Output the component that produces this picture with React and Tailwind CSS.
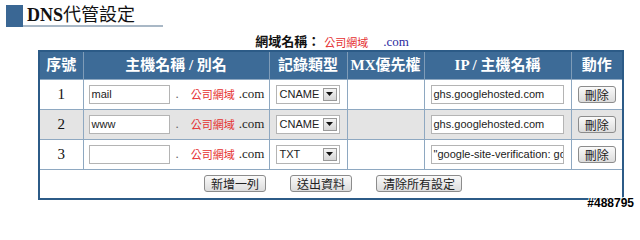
const serif = 'font-["Liberation_Serif","Noto_Sans_CJK_TC",serif]';

const rows = [
  { no: 1, host: 'mail', type: 'CNAME', ip: 'ghs.googlehosted.com', bg: 'bg-white' },
  { no: 2, host: 'www', type: 'CNAME', ip: 'ghs.googlehosted.com', bg: 'bg-[#e4e4e4]' },
  { no: 3, host: '', type: 'TXT', ip: '"google-site-verification: google', bg: 'bg-white' },
];

function Btn({ children, className = '' }) {
  return (
    <button className={`h-[17px] px-[6px] border border-[#8c8c8c] rounded-[3px] bg-gradient-to-b from-[#fafafa] to-[#dcdcdc] text-[12px] leading-[15px] text-[#222] font-["Noto_Sans_CJK_TC",sans-serif] ${className}`}>
      {children}
    </button>
  );
}

function TextBox({ value, width }) {
  return (
    <div className={`h-[19px] ${width} border border-[#b4b4b4] bg-white px-[2px] text-[11px] leading-[17px] text-[#222] font-["Liberation_Sans",sans-serif] overflow-hidden whitespace-nowrap`}>
      {value}
    </div>
  );
}

function Select({ value }) {
  return (
    <div className="h-[19px] w-[64px] border border-[#b4b4b4] bg-white flex items-center justify-between pl-[3px] pr-[2px]">
      <span className='text-[11px] leading-[17px] text-[#222] font-["Liberation_Sans",sans-serif]'>{value}</span>
      <span className="w-[14px] h-[13px] border border-[#9a9a9a] bg-gradient-to-b from-[#f4f4f4] to-[#d6d6d6] flex items-center justify-center">
        <svg width="7" height="4" viewBox="0 0 7 4"><path d="M0 0h7L3.5 4z" fill="#111" /></svg>
      </span>
    </div>
  );
}

export default function App() {
  const th = `bg-[#3d6b97] text-white font-bold text-[15px] border-x border-[#7f9cb8] ${serif}`;
  const td = 'border border-[#8ea8c1]';
  return (
    <div className="relative w-[640px] h-[211px] bg-white overflow-hidden">
      <div className="pt-[5px] pl-[6px] flex items-end">
        <div className="w-[17px] h-[22px] bg-[#3a6794]" />
        <div className="border-b-2 border-[#a9b8c6] pl-[4px] pr-[28px] h-[22px] flex items-end">
          <span className={`text-[18px] leading-[20px] text-[#111] ${serif}`}>
            <b>DNS</b>代管設定
          </span>
        </div>
      </div>

      <div className="ml-[38px] w-[584px] mt-[7px]">
        <div className="h-[16px] flex items-end justify-center pl-[4px]">
          <span className={`text-[13px] font-bold text-[#111] leading-[16px] ${serif}`}>網域名稱：</span>
          <span className='text-[11px] text-[#e53030] ml-[4px] leading-[16px] font-["Noto_Sans_CJK_TC",sans-serif]'>公司網域</span>
          <span className={`text-[13px] text-[#2a2aa0] ml-[15px] leading-[16px] ${serif}`}>.com</span>
        </div>

        <table className="w-[584px] border-collapse border-2 border-[#2c5b87] table-fixed">
          <colgroup>
            <col className="w-[44px]" />
            <col className="w-[186px]" />
            <col className="w-[78px]" />
            <col className="w-[77px]" />
            <col className="w-[147px]" />
            <col className="w-[52px]" />
          </colgroup>
          <thead>
            <tr className="h-[28px]">
              <th className={th}>序號</th>
              <th className={th}>主機名稱 / 別名</th>
              <th className={th}>記錄類型</th>
              <th className={th}>MX優先權</th>
              <th className={th}>IP / 主機名稱</th>
              <th className={th}>動作</th>
            </tr>
          </thead>
          <tbody>
            {rows.map((r) => (
              <tr key={r.no} className={`h-[30px] ${r.bg}`}>
                <td className={`${td} text-center text-[15px] text-[#111] ${serif}`}>{r.no}</td>
                <td className={td}>
                  <div className="flex items-center pl-[5px]">
                    <TextBox value={r.host} width="w-[81px]" />
                    <span className={`text-[13px] text-[#666] ml-[6px] ${serif}`}>.</span>
                    <span className='text-[11px] text-[#e53030] ml-[12px] font-["Noto_Sans_CJK_TC",sans-serif]'>公司網域</span>
                    <span className={`text-[13px] text-[#222] ml-[4px] ${serif}`}>.com</span>
                  </div>
                </td>
                <td className={td}>
                  <div className="pl-[6px]">
                    <Select value={r.type} />
                  </div>
                </td>
                <td className={td}></td>
                <td className={td}>
                  <div className="pl-[6px]">
                    <TextBox value={r.ip} width="w-[133px]" />
                  </div>
                </td>
                <td className={td}>
                  <div className="flex justify-center">
                    <Btn>刪除</Btn>
                  </div>
                </td>
              </tr>
            ))}
            <tr className="h-[30px] bg-white">
              <td colSpan={6} className={td}>
                <div className="flex justify-center gap-[24px] pl-[4px]">
                  <Btn>新增一列</Btn>
                  <Btn>送出資料</Btn>
                  <Btn>清除所有設定</Btn>
                </div>
              </td>
            </tr>
          </tbody>
        </table>
      </div>

      <div className='absolute right-[6px] bottom-[1px] text-[12px] font-bold text-black leading-[13px] font-["Liberation_Sans",sans-serif] [text-shadow:1px_0_0_#fff,-1px_0_0_#fff,0_1px_0_#fff,0_-1px_0_#fff]'>
        #488795
      </div>
    </div>
  );
}
